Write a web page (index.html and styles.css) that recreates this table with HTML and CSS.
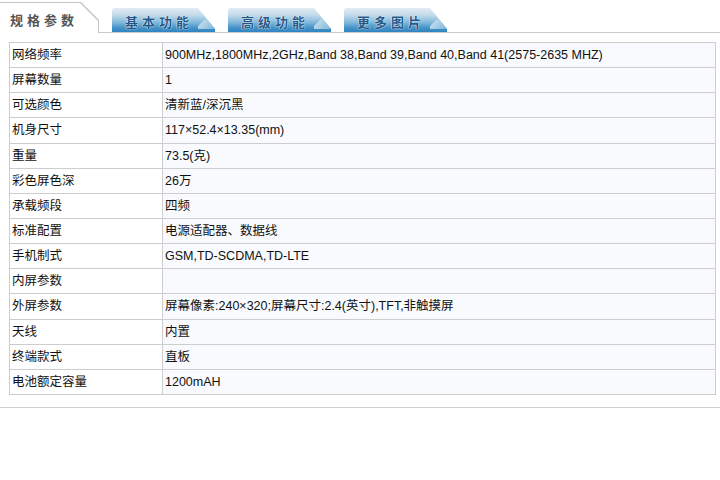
FILE: index.html
```html
<!DOCTYPE html>
<html lang="zh">
<head>
<meta charset="utf-8">
<link rel="stylesheet" href="styles.css">
</head>
<body>
<div class="tabs">
  <div class="tab tab-active"><span class="tab-label">规格参数</span></div>
  <div class="tab tab-blue"><span class="tab-label">基本功能</span></div>
  <div class="tab tab-blue"><span class="tab-label">高级功能</span></div>
  <div class="tab tab-blue"><span class="tab-label">更多图片</span></div>
  <div class="tab-rest"></div>
</div>
<div class="panel">
<table class="spec">
  <tr><td class="k">网络频率</td><td class="v">900MHz,1800MHz,2GHz,Band 38,Band 39,Band 40,Band 41(2575-2635 MHZ)</td></tr>
  <tr><td class="k">屏幕数量</td><td class="v">1</td></tr>
  <tr><td class="k">可选颜色</td><td class="v">清新蓝/深沉黑</td></tr>
  <tr><td class="k">机身尺寸</td><td class="v">117×52.4×13.35(mm)</td></tr>
  <tr><td class="k">重量</td><td class="v">73.5(克)</td></tr>
  <tr><td class="k">彩色屏色深</td><td class="v">26万</td></tr>
  <tr><td class="k">承载频段</td><td class="v">四频</td></tr>
  <tr><td class="k">标准配置</td><td class="v">电源适配器、数据线</td></tr>
  <tr><td class="k">手机制式</td><td class="v">GSM,TD-SCDMA,TD-LTE</td></tr>
  <tr><td class="k">内屏参数</td><td class="v"></td></tr>
  <tr><td class="k">外屏参数</td><td class="v">屏幕像素:240×320;屏幕尺寸:2.4(英寸),TFT,非触摸屏</td></tr>
  <tr><td class="k">天线</td><td class="v">内置</td></tr>
  <tr><td class="k">终端款式</td><td class="v">直板</td></tr>
  <tr><td class="k">电池额定容量</td><td class="v">1200mAH</td></tr>
</table>
</div>
</body>
</html>
```
FILE: styles.css
```css
html, body {
  margin: 0;
  padding: 0;
  background: #ffffff;
  font-family: "Liberation Sans", "Noto Sans CJK SC", sans-serif;
  font-size: 12px;
  color: #111;
}

.tabs {
  display: flex;
  align-items: flex-end;
  height: 33px;
  background: linear-gradient(to bottom, transparent 32px, #c9c9c9 32px);
}

.tab {
  position: relative;
  flex: none;
  display: flex;
  align-items: center;
}

.tab-label {
  position: relative;
  font-family: "Noto Sans CJK SC", sans-serif;
  font-size: 13px;
  letter-spacing: 4px;
}

.tab-active {
  width: 99px;
  height: 31px;
  padding-left: 10px;
  box-sizing: border-box;
  background: #c4c4c4;
  clip-path: polygon(0 0, 81px 0, 99px 18px, 99px 100%, 0 100%);
}
.tab-active::before {
  content: "";
  position: absolute;
  left: 0;
  top: 1px;
  right: 1px;
  bottom: 0;
  background: #fff;
  clip-path: polygon(0 0, 80px 0, 98px 18px, 98px 100%, 0 100%);
}
.tab-active .tab-label {
  color: #555;
  font-weight: bold;
  margin-top: 3px;
}

.tab-blue {
  width: 103px;
  height: 24px;
  margin-left: 13px;
  margin-bottom: 1px;
  padding-left: 13px;
  box-sizing: border-box;
  border-top-left-radius: 3px;
  background: linear-gradient(#e2ecf3 0%, #c2daea 30%, #86bbdc 58%, #4594c9 82%, #2f84c0 100%);
  clip-path: polygon(0 0, 86px 0, 103px 21px, 103px 100%, 0 100%);
}
.tab-blue::before {
  content: "";
  position: absolute;
  left: 86px;
  top: 0;
  width: 17px;
  height: 21px;
  background: linear-gradient(135deg, transparent 45%, #b9d7ea 50%, #7fb5d9 100%);
}
.tab-blue .tab-label {
  color: #235889;
  font-weight: bold;
  text-shadow: 0 0 1px #fff, 0 0 1px #fff;
  margin-top: 2px;
}

.tab-rest {
  flex: 1;
  height: 1px;
}

.panel {
  padding: 9px 4px 12px 9px;
  border-bottom: 1px solid #cfcfcf;
}

.spec {
  width: 100%;
  border-collapse: collapse;
  border: 1px solid #b8b8b8;
}

.spec td {
  height: 24.15px;
  padding: 0 3px;
  border: 1px solid #cdcdcd;
  line-height: 16px;
  font-size: 12.5px;
  color: #111;
  vertical-align: middle;
}

.spec td.k {
  width: 147px;
  padding-left: 2px;
  background: #ffffff;
}

.spec td.v {
  padding-left: 2px;
  background: #f8fafd;
}
```
